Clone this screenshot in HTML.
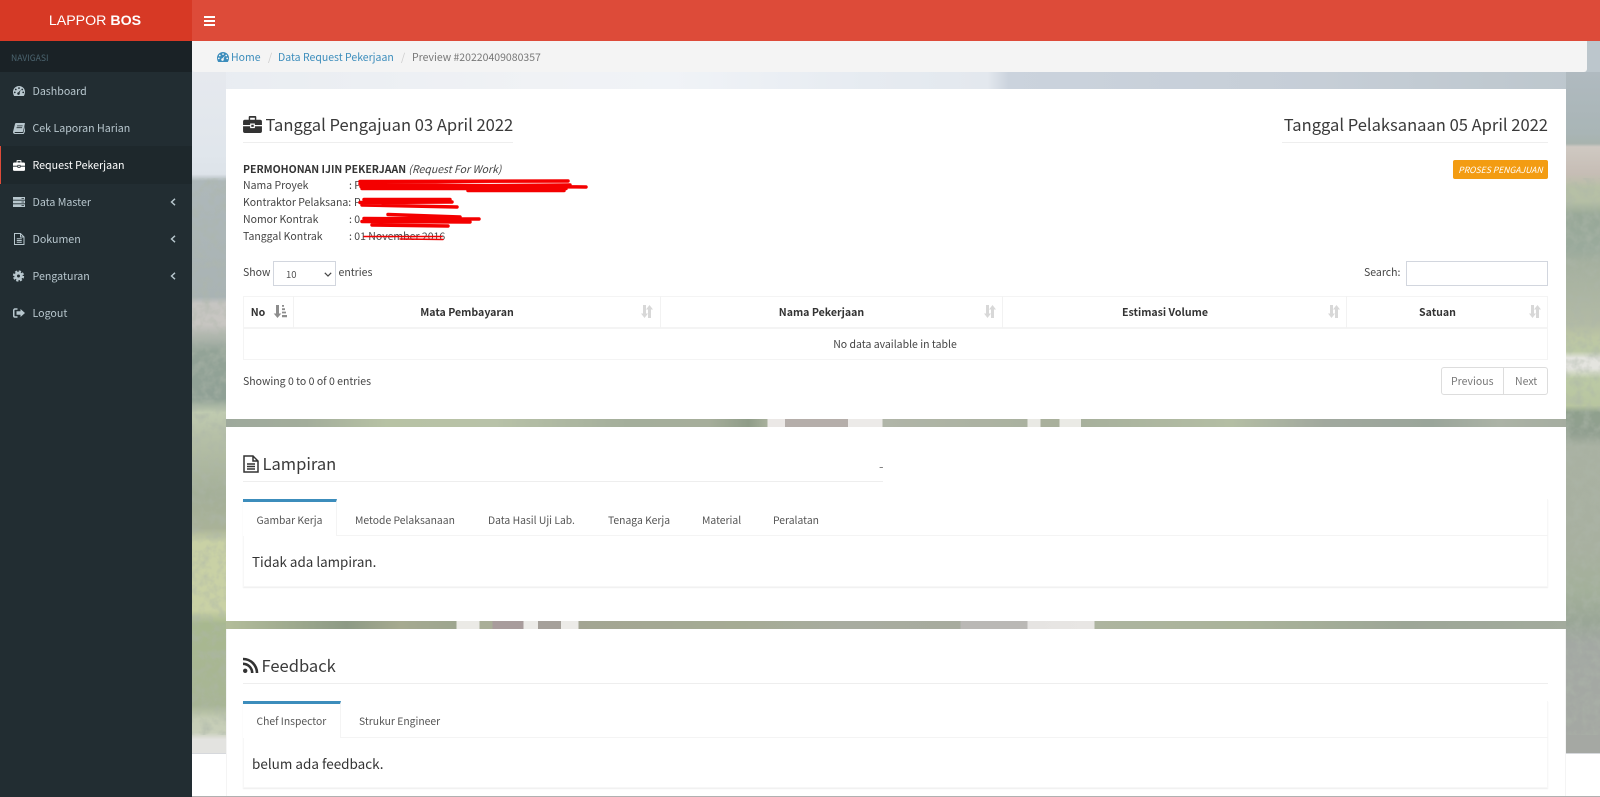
<!DOCTYPE html>
<html><head><meta charset="utf-8"><title>Preview</title>
<style>
*{box-sizing:border-box}
html,body{margin:0;padding:0;width:1600px;height:797px;overflow:hidden;background:#fff}
body{position:relative;font-family:"Noto Sans CJK JP","Liberation Sans",sans-serif;color:#333;font-size:10.5px}
.a{position:absolute}
.t{position:absolute;white-space:nowrap;line-height:20px;height:20px}
.m{color:#b8c7ce;font-size:10.65px;left:32.5px}
.h{font-size:16.55px;color:#3a3a3a;line-height:28px;height:28px}
.r{font-size:10.5px;color:#444}
.th{font-weight:700;color:#333;font-size:10.6px;transform:translateX(-50%)}
.tb{font-size:10.35px;color:#555}
.l{font-size:10.5px;color:#3c8dbc}
svg{position:absolute;overflow:visible}
.bd{position:absolute;background:#f2f2f2}
.box{box-shadow:0 1px 1px rgba(0,0,0,.07);border:1px solid #f7f7f7;border-top:0}
</style></head><body>

<!-- background -->
<div class="a" style="left:192px;top:41px;width:1408px;height:48px;background:linear-gradient(90deg,#e8ecf1 0,#f0f2f5 25%,#f0f3f7 34%,#e6ebf1 48%,#e3e8ee 56.5%,#cbd3dd 58%,#c6ced7 80%,#bcc6cc 100%)"></div>
<div class="a" style="left:192px;top:72px;width:34px;height:681px;background:linear-gradient(180deg,#e6e9ee 0,#e0e6ec 12%,#dde3e9 15%,#aeb8ba 16%,#a9b3b4 33%,#c6c5c2 34%,#c8c6c2 37%,#93a397 41%,#8fa095 48%,#c0cbb0 50%,#b7c1a8 53%,#a4af98 62%,#a9b298 67%,#c9d1a5 69%,#c9d1a5 79%,#a8b88f 81%,#a8b595 93%,#c5cdb5 95%,#c8cfba 97%,#e3e3e0 98%,#e3e3e0 100%)"></div>
<div class="a" style="left:1566px;top:72px;width:34px;height:681px;background:linear-gradient(180deg,#b0bac0 0,#a9b5b6 9%,#a8b3ae 10.5%,#cfc9c2 11%,#c6bdb5 15%,#b7c0a6 17%,#b5bfa5 19%,#98a898 21%,#9aaa9c 26%,#a5b09f 28%,#b2baa5 37%,#bdc7a4 39%,#bcc9a5 41%,#e4e4df 42%,#e4e4df 43.5%,#bccaa5 45%,#b8c5a0 49%,#8fa08d 50%,#919f90 53%,#a9b1a2 55%,#a8b0a0 70%,#a3b09a 76%,#9aa697 81%,#a3a8a3 84%,#a5a8a3 100%)"></div>
<svg style="left:192px;top:178px" width="1408" height="575" viewBox="0 0 1408 575"><filter id="n" x="0" y="0" width="100%" height="100%"><feTurbulence type="fractalNoise" baseFrequency=".11" numOctaves="3" seed="4"/><feColorMatrix values="0 0 0 0 .42 0 0 0 0 .47 0 0 0 0 .40 0 0 0 2.200 -.85"/></filter><rect width="1408" height="557" filter="url(#n)" opacity=".55"/></svg>
<div class="a" style="left:226px;top:419px;width:1340px;height:8px;background:linear-gradient(90deg,#9ea99c 0,#a3ad9b 6%,#b7c2a4 12%,#b8c2a8 20%,#a4ae9b 30%,#a6ae9b 36%,#8f9c88 39%,#a8b09c 40.4%,#ebe8e6 40.4%,#ebe8e6 41.7%,#b5aeaa 41.7%,#b5aeaa 46.4%,#eceae8 46.4%,#eceae8 49%,#b0b5a8 49%,#aab19f 59.8%,#e9e9e4 59.8%,#e9e9e4 60.8%,#a9b09c 60.8%,#a9b09c 62.2%,#eaeae5 62.2%,#eaeae5 63.8%,#a7b09c 63.8%,#b4bea4 75%,#a1a89e 82%,#9aa59a 90%,#acb3a6 95%,#a5ada0 100%)"></div>
<div class="a" style="left:226px;top:621px;width:1340px;height:8px;background:linear-gradient(90deg,#b3bd9a 0,#8d9a85 9%,#a6aa90 13%,#9da58f 17.2%,#ebeae6 17.2%,#ebeae6 18.9%,#a9ae98 18.9%,#a9ae98 19.9%,#a89c9c 19.9%,#a89c9c 22.2%,#ecebe8 22.2%,#ecebe8 23.3%,#a5a09a 23.3%,#a5a09a 25%,#ecebe8 25%,#ecebe8 26.3%,#a3a593 26.3%,#a5ab94 38%,#a8aca0 46%,#a7ab9e 54.8%,#bab8b5 54.8%,#bab8b5 59.8%,#e6e4e2 59.8%,#e8e6e4 64.8%,#adb49f 64.8%,#aab39a 76%,#9da697 88%,#a3ab9d 100%)"></div>
<div class="a" style="left:192px;top:753px;width:1408px;height:1px;background:#d6d8dc"></div>

<!-- panels -->
<div class="a" style="left:226px;top:89px;width:1340px;height:330px;background:#fff"></div>
<div class="a" style="left:226px;top:427px;width:1340px;height:194px;background:#fff"></div>
<div class="a" style="left:226px;top:629px;width:1340px;height:168px;background:#fff;border-left:1px solid #f4f4f4;border-right:1px solid #f4f4f4"></div>

<!-- topbar -->
<div class="a" style="left:0;top:0;width:1600px;height:41px;background:#dd4b39"></div>
<div class="a" style="left:0;top:0;width:192px;height:41px;background:#d73925"></div>
<div class="t" style="left:0;width:190px;top:11px;text-align:center;font-family:'Liberation Sans',sans-serif;font-size:14.2px;color:#fff">LAPPOR <b>BOS</b></div>
<svg style="left:204px;top:16px" width="11" height="10" viewBox="0 0 11 10"><path d="M0 0h11v2H0zM0 4h11v2H0zM0 8h11v2H0z" fill="#fff"/></svg>

<!-- sidebar -->
<div class="a" style="left:0;top:41px;width:192px;height:756px;background:#222d32"></div>
<div class="a" style="left:0;top:41px;width:192px;height:31px;background:#1a2226"></div>
<div class="t" style="left:11px;top:47.5px;font-size:8.6px;color:#4b646f">NAVIGASI</div>
<div class="a" style="left:0;top:146px;width:192px;height:38px;background:#1e282c;border-left:1px solid #dd4b39"></div>

<div class="t m" style="top:82px">Dashboard</div>
<div class="t m" style="top:119px">Cek Laporan Harian</div>
<div class="t m" style="top:156px;color:#fff">Request Pekerjaan</div>
<div class="t m" style="top:193px">Data Master</div>
<div class="t m" style="top:230px">Dokumen</div>
<div class="t m" style="top:267px">Pengaturan</div>
<div class="t m" style="top:304px">Logout</div>

<!-- sidebar icons -->
<svg style="left:13px;top:86px" width="12" height="10" viewBox="0 0 12 10"><path fill-rule="evenodd" d="M6 0a6 6 0 0 1 6 6c0 1.5-.5 2.800-1.200 4H1.200C.5 8.800 0 7.500 0 6a6 6 0 0 1 6-6zM6 1.200a.9.9 0 1 0 0 1.800.9.9 0 0 0 0-1.800zM2.800 2.600a.9.9 0 1 0 0 1.800.9.9 0 0 0 0-1.800zM9.200 2.600a.9.9 0 1 0 0 1.800.9.9 0 0 0 0-1.800zM1.800 5.500a.9.9 0 1 0 0 1.800.9.9 0 0 0 0-1.800zM10.200 5.500a.9.9 0 1 0 0 1.800.9.9 0 0 0 0-1.800zM7.800 3.800 5.500 6.300a1.300 1.300 0 1 0 1.100.6z" fill="#b8c7ce"/></svg>
<svg style="left:13px;top:123px" width="12" height="11" viewBox="0 0 12 11"><path fill-rule="evenodd" d="M3 0h8.500c.4 0 .5.300.4.700L10 8.500c-.1.400-.4.500-.8.500H2.200c-.8 0-.8 1 0 1h7.600c.3 0 .5-.2.600-.5L12 3v5.500l-1 2c-.1.300-.4.500-.8.500H2C.6 11-.3 9.800.1 8.500L2 1C2.200.4 2.500 0 3 0zM4.200 2.500l-.2.800h5.500l.2-.8zM3.700 4.300l-.2.800H9l.2-.8z" fill="#b8c7ce"/></svg>
<svg style="left:13px;top:160px" width="12" height="11" viewBox="0 0 20 18"><path fill-rule="evenodd" d="M7 0h6a1 1 0 0 1 1 1v3h4a2 2 0 0 1 2 2v3.500h-7.500V8h-5v1.500H0V6a2 2 0 0 1 2-2h4V1a1 1 0 0 1 1-1zM7.500 1.800V4h5V1.800zM0 10.800h7.500v2h5v-2H20V16a2 2 0 0 1-2 2H2a2 2 0 0 1-2-2zM8.700 9.300h2.600v2.200H8.700z" fill="#fff"/></svg>
<svg style="left:13px;top:197px" width="12" height="10" viewBox="0 0 12 10"><path fill-rule="evenodd" d="M0 0h12v2.800H0zM0 3.600h12v2.800H0zM0 7.200h12V10H0zM8.500 1v.8h2.500V1zM8.500 4.600v.8h2.500v-.8zM8.500 8.200V9h2.500v-.8z" fill="#b8c7ce"/></svg>
<svg style="left:13.5px;top:233px" width="10.5" height="12" viewBox="0 0 21 24"><path d="M1 1h12l7 7v15H1z M13 1v7h7 M5.500 11.500h10 M5.500 15h10 M5.500 18.500h10" fill="none" stroke="#b8c7ce" stroke-width="2"/></svg>
<svg style="left:13px;top:270px" width="11" height="12" viewBox="0 0 22 24"><circle cx="11" cy="12" r="5.700" fill="none" stroke="#b8c7ce" stroke-width="5.500"/><circle cx="11" cy="12" r="9.500" fill="none" stroke="#b8c7ce" stroke-width="3.500" stroke-dasharray="4.500 3"/></svg>
<svg style="left:13px;top:308px" width="12" height="10" viewBox="0 0 24 20"><path d="M9 2H4a2.500 2.500 0 0 0-2.500 2.500v11A2.500 2.500 0 0 0 4 18h5" fill="none" stroke="#b8c7ce" stroke-width="3"/><path d="M15 2l9 8-9 8v-4.500H7v-7h8z" fill="#b8c7ce"/></svg>
<svg style="left:170px;top:198px" width="6" height="8" viewBox="0 0 6 8"><path d="M5 .8 1.500 4 5 7.200" fill="none" stroke="#b8c7ce" stroke-width="1.400"/></svg>
<svg style="left:170px;top:235px" width="6" height="8" viewBox="0 0 6 8"><path d="M5 .8 1.500 4 5 7.200" fill="none" stroke="#b8c7ce" stroke-width="1.400"/></svg>
<svg style="left:170px;top:272px" width="6" height="8" viewBox="0 0 6 8"><path d="M5 .8 1.500 4 5 7.200" fill="none" stroke="#b8c7ce" stroke-width="1.400"/></svg>

<!-- breadcrumb -->
<div class="a" style="left:192px;top:41px;width:1395px;height:31px;background:#f4f4f4;border-radius:0 0 3px 3px"></div>
<svg style="left:217px;top:52px" width="12" height="10" viewBox="0 0 12 10"><path fill-rule="evenodd" d="M6 0a6 6 0 0 1 6 6c0 1.5-.5 2.800-1.200 4H1.200C.5 8.800 0 7.500 0 6a6 6 0 0 1 6-6zM6 1.200a.9.9 0 1 0 0 1.800.9.9 0 0 0 0-1.800zM2.800 2.600a.9.9 0 1 0 0 1.800.9.9 0 0 0 0-1.800zM9.200 2.600a.9.9 0 1 0 0 1.800.9.9 0 0 0 0-1.800zM1.800 5.500a.9.9 0 1 0 0 1.800.9.9 0 0 0 0-1.800zM10.200 5.500a.9.9 0 1 0 0 1.800.9.9 0 0 0 0-1.800zM7.800 3.800 5.500 6.300a1.300 1.300 0 1 0 1.100.6z" fill="#3c8dbc"/></svg>
<div class="t l" style="left:231px;top:47.5px">Home</div>
<div class="t" style="left:268px;top:47.5px;color:#ccc;font-size:10.5px">/</div>
<div class="t l" style="left:278px;top:47.5px">Data Request Pekerjaan</div>
<div class="t" style="left:401px;top:47.5px;color:#ccc;font-size:10.5px">/</div>
<div class="t" style="left:412px;top:47.5px;color:#777;font-size:10.5px">Preview #20220409080357</div>

<!-- panel 1 -->
<svg style="left:243px;top:116px" width="19" height="17" viewBox="0 0 20 18"><path fill-rule="evenodd" d="M7 0h6a1 1 0 0 1 1 1v3h4a2 2 0 0 1 2 2v3.500h-7.500V8h-5v1.500H0V6a2 2 0 0 1 2-2h4V1a1 1 0 0 1 1-1zM7.500 1.800V4h5V1.800zM0 10.800h7.500v2h5v-2H20V16a2 2 0 0 1-2 2H2a2 2 0 0 1-2-2zM8.700 9.300h2.600v2.200H8.700z" fill="#333"/></svg>
<div class="t h" style="left:265.5px;top:110px">Tanggal Pengajuan 03 April 2022</div>
<div class="t h" style="right:52px;top:110px">Tanggal Pelaksanaan 05 April 2022</div>
<div class="a" style="left:243px;top:142px;width:270px;height:1px;background:#eee"></div>
<div class="a" style="left:1282px;top:142px;width:266px;height:1px;background:#eee"></div>

<div class="t r" style="left:243px;top:160px"><b style="color:#333">PERMOHONAN IJIN PEKERJAAN</b> <i>(Request For Work)</i></div>
<div class="t r" style="left:243px;top:176px">Nama Proyek</div>
<div class="t r" style="left:349px;top:176px">: P</div>
<div class="t r" style="left:243px;top:193px">Kontraktor Pelaksana:</div>
<div class="t r" style="left:354px;top:193px">P</div>
<div class="t r" style="left:243px;top:210px">Nomor Kontrak</div>
<div class="t r" style="left:349px;top:210px">: 0</div>
<div class="t r" style="left:243px;top:227px">Tanggal Kontrak</div>
<div class="t r" style="left:349px;top:227px">: 01 November 2016</div>

<!-- red scribbles -->
<svg style="left:0;top:0" width="1600" height="797" viewBox="0 0 1600 797">
<g fill="none" stroke="#f40000" stroke-linecap="round">
<path d="M360 181.500 L568 181 M360 184 L586 187 M361 186.500 L570 185 M362 188.500 L566 188.500 M468 190.500 L564 190.500" stroke-width="3.500"/>
<path d="M364 199.500 L450 199.500 M360 202.500 L452 202 M362 205 L457 207" stroke-width="3.500"/>
<path d="M388 214.500 L460 217 M364 218.500 L479 219 M362 221.500 L470 222 M372 225 L448 226" stroke-width="3.500"/>
<path d="M364 236.500 L442 236.500 M400 239 L443 239.500" stroke-width="1.500"/>
</g></svg>

<div class="a" style="left:1453px;top:160px;width:95px;height:18.5px;background:#f39c12;border-radius:2px"></div>
<div class="t" style="left:1453px;width:95px;top:159.5px;text-align:center;color:#fff;font-size:8.6px;font-style:italic">PROSES PENGAJUAN</div>

<div class="t r" style="left:243px;top:263px">Show</div>
<div class="a" style="left:272.5px;top:261px;width:63.5px;height:25px;border:1px solid #d2d6de;background:#fff"></div>
<div class="t" style="left:286px;top:264px;font-size:9.5px;color:#555">10</div>
<svg style="left:324px;top:272px" width="8" height="5" viewBox="0 0 8 5"><path d="M.8.800 4 4 7.200.800" fill="none" stroke="#444" stroke-width="1.200"/></svg>
<div class="t r" style="left:338.5px;top:263px">entries</div>
<div class="t r" style="left:1364px;top:263px">Search:</div>
<div class="a" style="left:1406px;top:261px;width:142px;height:25px;border:1px solid #d2d6de;background:#fff"></div>

<!-- table -->
<div class="a" style="left:243px;top:296px;width:1305px;height:64px;border:1px solid #f4f4f4"></div>
<div class="a" style="left:243px;top:327px;width:1305px;height:2px;background:#f4f4f4"></div>
<div class="bd" style="left:293px;top:296px;width:1px;height:32px"></div>
<div class="bd" style="left:660px;top:296px;width:1px;height:32px"></div>
<div class="bd" style="left:1002px;top:296px;width:1px;height:32px"></div>
<div class="bd" style="left:1346px;top:296px;width:1px;height:32px"></div>
<div class="t th" style="left:258px;top:302.5px">No</div>
<div class="t th" style="left:467px;top:302.5px">Mata Pembayaran</div>
<div class="t th" style="left:821.5px;top:302.5px">Nama Pekerjaan</div>
<div class="t th" style="left:1165px;top:302.5px">Estimasi Volume</div>
<div class="t th" style="left:1437.5px;top:302.5px">Satuan</div>
<svg style="left:274px;top:305px" width="13" height="13" viewBox="0 0 13 13"><path d="M2 0h3v8.500h2.300L3.500 13-.3 8.500H2zM8 0h2v1.800H8zM8 3.300h3v1.800H8zM8 6.600h4v1.800H8zM8 10h5v2.200H8z" fill="#8d8d8d"/></svg>
<svg style="left:641px;top:305px" width="12" height="13" viewBox="0 0 12 13"><path d="M2 0h3v8.500h2L3.500 13 0 8.500h2zM7 13h3V4.500h2L8.500 0 5 4.500h2z" fill="#d8d8d8"/></svg>
<svg style="left:983.5px;top:305px" width="12" height="13" viewBox="0 0 12 13"><path d="M2 0h3v8.500h2L3.500 13 0 8.500h2zM7 13h3V4.500h2L8.500 0 5 4.500h2z" fill="#d8d8d8"/></svg>
<svg style="left:1328px;top:305px" width="12" height="13" viewBox="0 0 12 13"><path d="M2 0h3v8.500h2L3.500 13 0 8.500h2zM7 13h3V4.500h2L8.500 0 5 4.500h2z" fill="#d8d8d8"/></svg>
<svg style="left:1528.5px;top:305px" width="12" height="13" viewBox="0 0 12 13"><path d="M2 0h3v8.500h2L3.500 13 0 8.500h2zM7 13h3V4.500h2L8.500 0 5 4.500h2z" fill="#d8d8d8"/></svg>
<div class="t r" style="left:0;width:1790px;text-align:center;top:335px">No data available in table</div>
<div class="t r" style="left:243px;top:371.5px">Showing 0 to 0 of 0 entries</div>

<div class="a" style="left:1440.5px;top:367px;width:107.5px;height:28px;border:1px solid #ddd;border-radius:3px;background:#fff"></div>
<div class="a" style="left:1503px;top:367px;width:1px;height:28px;background:#ddd"></div>
<div class="t" style="left:1451px;top:372px;color:#777;font-size:10.5px">Previous</div>
<div class="t" style="left:1515px;top:372px;color:#777;font-size:10.5px">Next</div>

<!-- panel 2 -->
<svg style="left:243px;top:455px" width="16" height="18" viewBox="0 0 16 18"><path d="M1 1h9l5 5v11H1z M10 1v5h5 M4 9h8 M4 11.500h8 M4 14h8" fill="none" stroke="#333" stroke-width="1.500"/></svg>
<div class="t h" style="left:262.5px;top:449px">Lampiran</div>
<div class="a" style="left:243px;top:481px;width:640px;height:1px;background:#eee"></div>
<div class="t" style="left:879px;top:455.5px;color:#777;font-size:13px">-</div>

<div class="a box" style="left:243px;top:499px;width:1305px;height:88px;background:#fff"></div>
<div class="a" style="left:243px;top:535px;width:1305px;height:1px;background:#f4f4f4"></div>
<div class="a" style="left:243px;top:499px;width:94px;height:37px;background:#fff;border-top:3px solid #3c8dbc;border-right:1px solid #f4f4f4"></div>
<div class="t tb" style="left:256.5px;top:509.5px">Gambar Kerja</div>
<div class="t tb" style="left:355px;top:509.5px">Metode Pelaksanaan</div>
<div class="t tb" style="left:488px;top:509.5px">Data Hasil Uji Lab.</div>
<div class="t tb" style="left:608px;top:509.5px">Tenaga Kerja</div>
<div class="t tb" style="left:702px;top:509.5px">Material</div>
<div class="t tb" style="left:773px;top:509.5px">Peralatan</div>
<div class="t" style="left:252px;top:551px;font-size:13.4px;color:#333">Tidak ada lampiran.</div>

<!-- panel 3 -->
<svg style="left:243px;top:658px" width="15" height="15" viewBox="0 0 15 15"><circle cx="2.200" cy="12.800" r="2.200" fill="#333"/><path d="M0 5.800a9.200 9.200 0 0 1 9.200 9.200M0 1a14 14 0 0 1 14 14" fill="none" stroke="#333" stroke-width="2.600"/></svg>
<div class="t h" style="left:261.5px;top:651px">Feedback</div>
<div class="a" style="left:243px;top:683px;width:1305px;height:1px;background:#eee"></div>

<div class="a box" style="left:243px;top:701px;width:1305px;height:87px;background:#fff"></div>
<div class="a" style="left:243px;top:737px;width:1305px;height:1px;background:#f4f4f4"></div>
<div class="a" style="left:243px;top:701px;width:98px;height:37px;background:#fff;border-top:3px solid #3c8dbc;border-right:1px solid #f4f4f4"></div>
<div class="t tb" style="left:256.5px;top:711px">Chef Inspector</div>
<div class="t tb" style="left:359px;top:711px">Strukur Engineer</div>
<div class="t" style="left:252px;top:753px;font-size:13.5px;color:#333">belum ada feedback.</div>

<div class="a" style="left:192px;top:796px;width:1408px;height:1px;background:#b0b0b0"></div>
</body></html>
